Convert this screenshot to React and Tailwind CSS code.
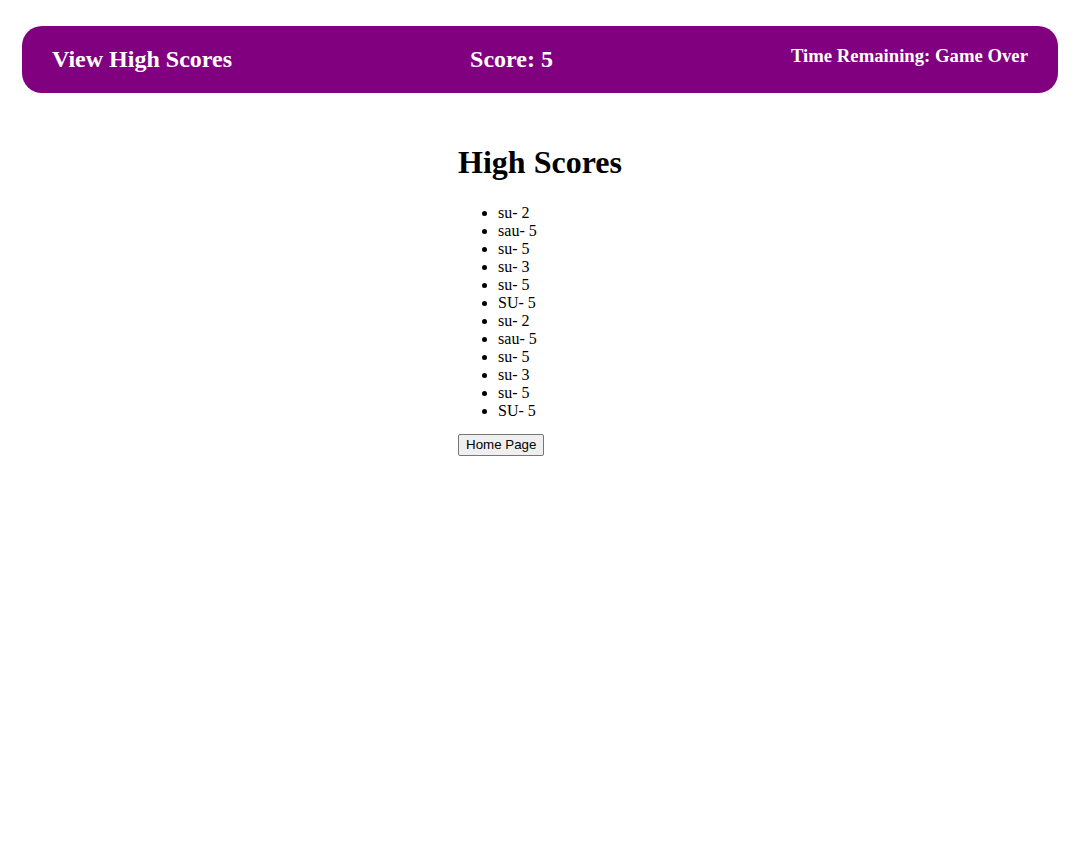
import React from 'react';

const scores = [
  'su- 2', 'sau- 5', 'su- 5', 'su- 3', 'su- 5', 'SU- 5',
  'su- 2', 'sau- 5', 'su- 5', 'su- 3', 'su- 5', 'SU- 5',
];

export default function App() {
  return (
    <div className="min-h-screen bg-white text-black font-['Liberation_Serif','Times_New_Roman',serif] leading-[normal]">
      {/* Top bar */}
      <header className="ml-[22px] mr-[20px] mt-[26px] flex items-start justify-between rounded-[20px] bg-[#800080] px-[30px] text-white">
        <h2 className="my-[19.92px] text-[24px] font-bold leading-[normal]">View High Scores</h2>
        <h2 className="my-[19.92px] text-[24px] font-bold leading-[normal]">Score: 5</h2>
        <h3 className="my-[18.72px] text-[18.72px] font-bold leading-[normal]">Time Remaining: Game Over</h3>
      </header>

      {/* High scores */}
      <div className="mx-auto mt-[51px] w-fit pl-[2px]">
        <h1 className="mb-[23px] text-[32px] font-bold leading-[normal]">High Scores</h1>
        <ul className="mb-[14px] list-disc pl-[40px] text-[16px]">
          {scores.map((s, i) => (
            <li key={i}>{s}</li>
          ))}
        </ul>
        <button className="rounded-[2px] border border-[#767676] bg-[#efefef] px-[7px] pt-[2px] pb-[3px] font-['Liberation_Sans',Arial,sans-serif] text-[13.33px] leading-[normal]">
          Home Page
        </button>
      </div>
    </div>
  );
}
